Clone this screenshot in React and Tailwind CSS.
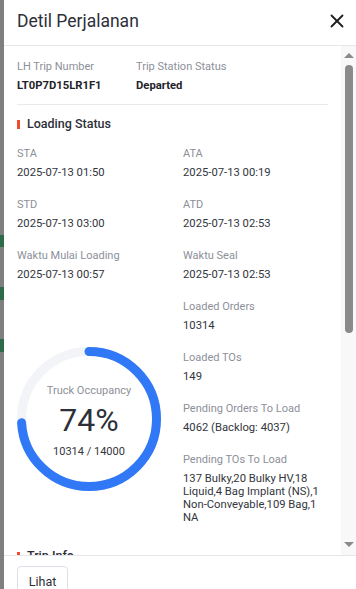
import React from "react";

const Field = ({ label, value, bold }) => (
  <div className="flex flex-col">
    <div className="text-[11px] leading-[18px] text-[#8c9099]">{label}</div>
    <div className={`mt-[1px] text-[11.25px] leading-[18px] ${bold ? "font-bold text-[#1f2329]" : "text-[#33363d]"}`}>{value}</div>
  </div>
);

const SectionTitle = ({ children }) => (
  <div className="flex items-center h-[20px]">
    <div className="w-[3px] h-[9px] bg-[#ee4d2d]" />
    <div className="ml-[7px] text-[12.5px] font-medium text-[#2d3038]">{children}</div>
  </div>
);

function Ring() {
  const size = 144;
  const sw = 9;
  const r = (size - sw) / 2;
  const c = 2 * Math.PI * r;
  return (
    <div className="relative w-[144px] h-[144px]">
      <svg width={size} height={size} viewBox={`0 0 ${size} ${size}`}>
        <circle cx={size / 2} cy={size / 2} r={r} fill="none" stroke="#f2f4f8" strokeWidth={sw} />
        <circle
          cx={size / 2}
          cy={size / 2}
          r={r}
          fill="none"
          stroke="#3078f5"
          strokeWidth={sw}
          strokeLinecap="round"
          strokeDasharray={`${c * 0.74} ${c}`}
          transform={`rotate(-90 ${size / 2} ${size / 2})`}
        />
      </svg>
      <div className="absolute inset-0 flex flex-col items-center">
        <div className="mt-[37px] text-[11px] leading-[14px] text-[#8c9099]">Truck Occupancy</div>
        <div className="mt-[4px] text-[32px] leading-[36px] text-[#2d3038]">74%</div>
        <div className="mt-[7px] text-[11px] leading-[14px] text-[#33363d]">10314 / 14000</div>
      </div>
    </div>
  );
}

export default function App() {
  return (
    <div className="w-[356px] h-[589px] flex overflow-hidden bg-[#7f7f7f]" style={{ fontFamily: "Roboto, 'Liberation Sans', sans-serif" }}>
      <div className="w-[4px] shrink-0 flex flex-col">
        <div className="h-[235px]" />
        <div className="h-[12px] bg-[#2e6b4a]" />
        <div className="h-[40px]" />
        <div className="h-[13px] bg-[#2e6b4a]" />
        <div className="h-[39px]" />
        <div className="h-[13px] bg-[#2e6b4a]" />
      </div>
      <div className="flex-1 min-w-0 bg-white flex flex-col">
        <div className="h-[46px] shrink-0 border-b border-[#e4e6eb] flex items-center justify-between pl-[13px] pr-[8px]">
          <div className="text-[17.5px] text-[#2d3038] -mt-[3px]">Detil Perjalanan</div>
          <svg width="22" height="22" viewBox="0 0 24 24" fill="none" stroke="#1f1f1f" strokeWidth="2" strokeLinecap="round" className="-mt-[4px]">
            <path d="M18 6 6 18" />
            <path d="m6 6 12 12" />
          </svg>
        </div>
        <div className="flex-1 flex min-h-0">
          <div className="flex-1 min-w-0 overflow-hidden px-[13px] pt-[12px]">
            <div className="flex">
              <div className="w-[119px]">
                <Field label="LH Trip Number" value="LT0P7D15LR1F1" bold />
              </div>
              <Field label="Trip Station Status" value="Departed" bold />
            </div>
            <div className="mt-[9px] h-px bg-[#e8eaee]" />
            <div className="mt-[9px]">
              <SectionTitle>Loading Status</SectionTitle>
            </div>
            <div className="mt-[11px] grid grid-cols-[166px_1fr] gap-y-[14px]">
              <Field label="STA" value="2025-07-13 01:50" />
              <Field label="ATA" value="2025-07-13 00:19" />
              <Field label="STD" value="2025-07-13 03:00" />
              <Field label="ATD" value="2025-07-13 02:53" />
              <Field label="Waktu Mulai Loading" value="2025-07-13 00:57" />
              <Field label="Waktu Seal" value="2025-07-13 02:53" />
              <div className="pt-[49px]">
                <Ring />
              </div>
              <div className="flex flex-col gap-[14px]">
                <Field label="Loaded Orders" value="10314" />
                <Field label="Loaded TOs" value="149" />
                <Field label="Pending Orders To Load" value="4062 (Backlog: 4037)" />
                <div className="flex flex-col">
                  <div className="text-[11px] leading-[18px] text-[#8c9099]">Pending TOs To Load</div>
                  <div className="mt-[3px] text-[11.25px] leading-[13px] text-[#33363d] w-[150px]">
                    137 Bulky,20 Bulky HV,18 Liquid,4 Bag Implant (NS),1 Non-Conveyable,109 Bag,1 NA
                  </div>
                </div>
              </div>
            </div>
            <div className="mt-[22px]">
              <SectionTitle>Trip Info</SectionTitle>
            </div>
          </div>
          <div className="w-[15px] shrink-0 bg-[#f8f8f8] flex flex-col items-center">
            <div className="mt-[7px] w-0 h-0 border-l-[5px] border-r-[5px] border-b-[5px] border-l-transparent border-r-transparent border-b-[#8a8a8a]" />
            <div className="mt-[7px] w-[8px] h-[268px] rounded-full bg-[#8a8a8a]" />
            <div className="flex-1" />
            <div className="mb-[8px] w-0 h-0 border-l-[5px] border-r-[5px] border-t-[5px] border-l-transparent border-r-transparent border-t-[#8a8a8a]" />
          </div>
        </div>
        <div className="h-[34px] shrink-0 border-t border-[#e4e6eb] pl-[13px] pt-[10px]">
          <div className="w-[51px] h-[32px] border border-[#dcdfe6] rounded-[4px] flex items-center justify-center text-[12.5px] text-[#2d3038]">Lihat</div>
        </div>
      </div>
    </div>
  );
}
